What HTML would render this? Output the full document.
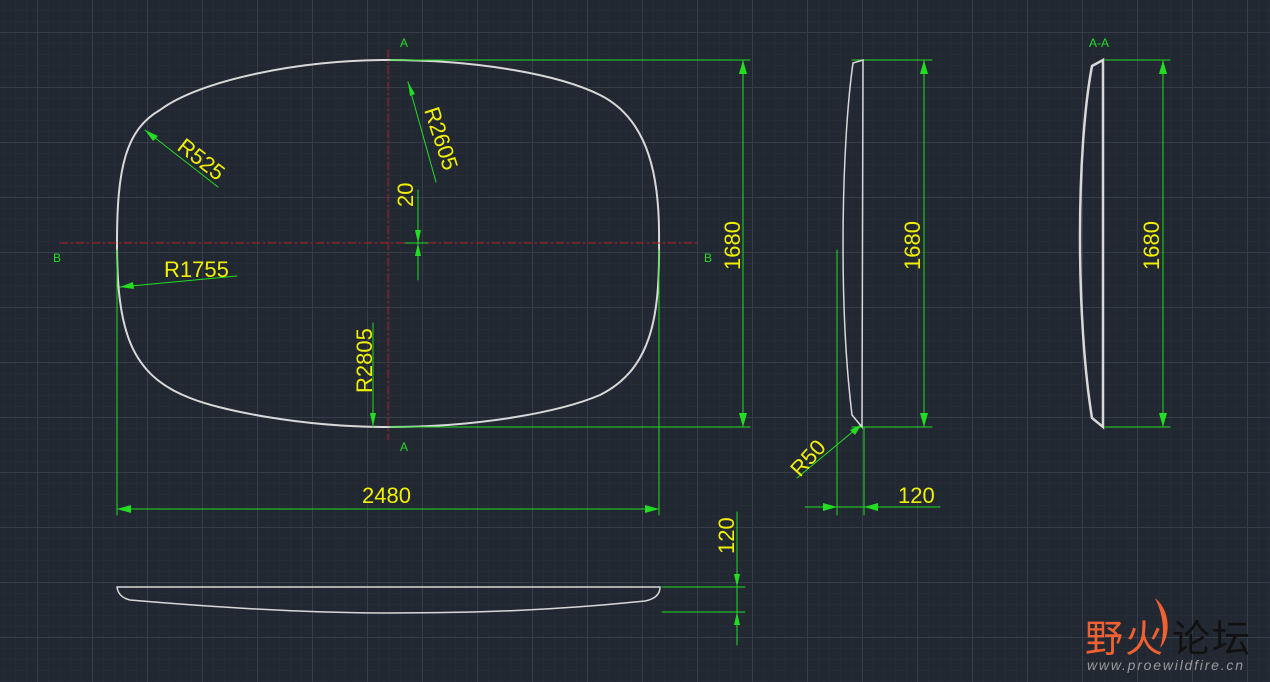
<!DOCTYPE html><html><head><style>html,body{margin:0;padding:0;background:#222832;overflow:hidden}svg{display:block}text{font-family:"Liberation Sans",sans-serif}</style></head><body>
<svg width="1270" height="682" viewBox="0 0 1270 682" xmlns="http://www.w3.org/2000/svg">
<defs>
<pattern id="mi" width="11" height="11" patternUnits="userSpaceOnUse" x="4" y="10"><path d="M0 0H11M0 0V11" stroke="#2b313c" stroke-width="1" fill="none"/></pattern>
<pattern id="ma" width="55" height="55" patternUnits="userSpaceOnUse" x="37" y="32"><path d="M0 0.5H55M0.5 0V55" stroke="#363d4a" stroke-width="1" fill="none"/></pattern>
</defs>
<rect width="1270" height="682" fill="#222832"/>
<rect width="1270" height="682" fill="url(#mi)"/>
<rect width="1270" height="682" fill="url(#ma)"/>
<g fill="none" stroke-linecap="round">
<path d="M388 60 C480 60 560 75 600 95 C650 120 660 180 659 243 C660 320 650 370 600 395 C560 412 480 427 388 427 C300 427 220 410 190 398 C130 375 117 330 117 243 C117 170 125 130 160 110 C200 80 300 60 388 60 Z" stroke="#d8d8d8" stroke-width="2"/>
<path d="M60 243H700" stroke="#b02020" stroke-width="1" stroke-dasharray="8 3 2 3"/>
<path d="M388 50V440" stroke="#b02020" stroke-width="1" stroke-dasharray="8 3 2 3"/>
<g stroke="#22dd22" stroke-width="1">
<path d="M390 60H750M390 427H750M743 60V427"/>
<path d="M117 250V515M659 250V515M117 509H659"/>
<path d="M145 130L218 187M120 287L237 276M408 82L436 182M373 427V323M418 190V280M405 243H428"/>
<path d="M852 60H932M852 427H932M924 60V427"/>
<path d="M1105 60H1170M1105 427H1170M1163 60V427"/>
<path d="M837 250V515M864 428V515M805 507H940M862 424L797 478"/>
<path d="M662 587H745M662 612H745M737 512V645"/>
</g>
<g fill="#22dd22">
<path d="M743 60l-4 14h8zM743 427l-4-14h8zM924 60l-4 14h8zM924 427l-4-14h8zM1163 60l-4 14h8zM1163 427l-4-14h8z"/>
<path d="M117 509l14-4v8zM659 509l-14-4v8zM837 507l-14-4v8zM864 507l14-4v8z"/>
<path d="M145 130l13 6-5 5zM120 287l13-5 1 7zM408 82l2 14 5-2zM373 427l-3-14h6zM418 243l-3-13h6zM418 243l-3 13h6zM737 587l-3-13h6zM737 612l-3 13h6zM862 424l-12 6 5 5z"/>
</g>
<path d="M863 60L853 63C842 140 838 300 852 415L862 427Z" stroke="#d8d8d8" stroke-width="1.5" fill="none"/>
<path d="M1103 60L1092 66C1076 150 1076 320 1092 418L1103 427Z" stroke="#d8d8d8" stroke-width="2.5" fill="none"/>
<path d="M117 587H660C660 594 655 599 645 601C560 610 480 613 388 613C300 613 200 606 130 600C122 598 118 594 117 587Z" stroke="#d8d8d8" stroke-width="1.5"/>
</g>
<g font-size="22" fill="#f0f000">
<text x="362" y="503">2480</text>
<text x="164" y="277">R1755</text>
<text transform="translate(176,149) rotate(38)">R525</text>
<text transform="translate(424,110) rotate(72)">R2605</text>
<text transform="translate(413,207) rotate(-90)">20</text>
<text transform="translate(372,393) rotate(-90)">R2805</text>
<text transform="translate(740,270) rotate(-90)">1680</text>
<text transform="translate(920,270) rotate(-90)">1680</text>
<text transform="translate(1159,270) rotate(-90)">1680</text>
<text transform="translate(800,478) rotate(-48)">R50</text>
<text x="898" y="503">120</text>
<text transform="translate(734,554) rotate(-90)">120</text>
</g>
<g font-size="12" fill="#22dd22">
<text x="400" y="47">A</text><text x="400" y="451">A</text>
<text x="53" y="262">B</text><text x="704" y="262">B</text>
<text x="1089" y="47">A-A</text>
</g>
<text x="1085" y="652" font-size="38" fill="#f06030" font-family="'Noto Sans CJK SC',sans-serif" textLength="78">野火</text>
<text x="1172" y="652" font-size="38" fill="#111" font-family="'Noto Sans CJK SC',sans-serif" textLength="78">论坛</text>
<path d="M1155 598C1172 612 1170 638 1160 648C1166 630 1162 612 1155 598Z" fill="#f06030"/>
<text x="1087" y="670" font-size="14" font-style="italic" fill="#999" textLength="156">www.proewildfire.cn</text>
</svg>
</body></html>
